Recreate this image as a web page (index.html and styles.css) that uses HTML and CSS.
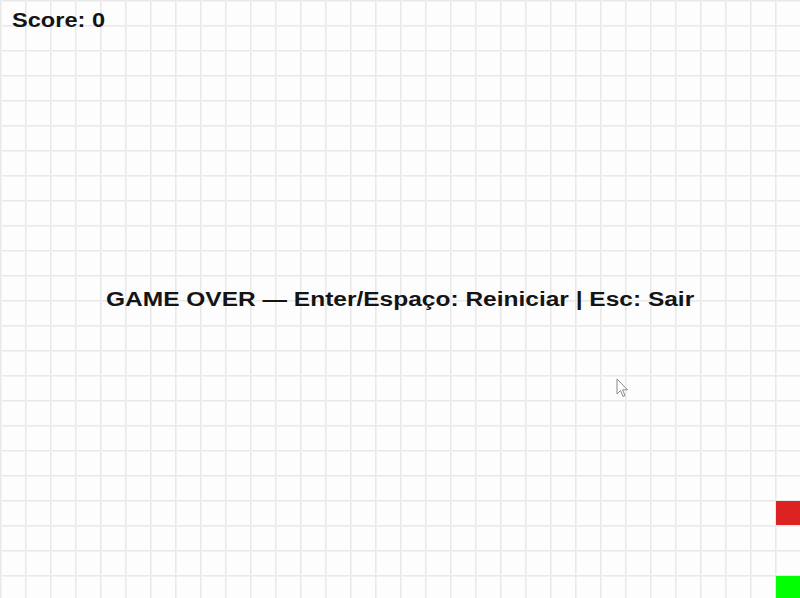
FILE: index.html
```html
<!DOCTYPE html>
<html lang="pt">
<head>
<meta charset="utf-8">
<title>Snake</title>
<link rel="stylesheet" href="styles.css">
</head>
<body>
<div class="game">
  <div class="score">Score: 0</div>
  <div class="message">GAME OVER — Enter/Espaço: Reiniciar | Esc: Sair</div>
  <div class="cell food"></div>
  <div class="cell snake"></div>
  <svg class="cursor" width="14" height="22" viewBox="0 0 14 22">
    <path d="M1 1 L1 16 L4.5 12.5 L7 18.5 L9 17.6 L6.6 11.8 L11.5 11.8 Z" fill="#fff" stroke="#8a8a8a" stroke-width="1" stroke-linejoin="round"/>
  </svg>
</div>
</body>
</html>
```
FILE: styles.css
```css
html, body {
  margin: 0;
  padding: 0;
  background: #fff;
}

.game {
  position: relative;
  width: 800px;
  height: 598px;
  overflow: hidden;
  display: grid;
  background-color: #fdfdfd;
  background-image:
    linear-gradient(to right, #e9e9e9 0, #e9e9e9 1px, #f1f1f1 1px, #f1f1f1 2px, transparent 2px),
    linear-gradient(to bottom, #e9e9e9 0, #e9e9e9 1px, #f1f1f1 1px, #f1f1f1 2px, transparent 2px);
  background-size: 25px 25px;
  font-family: "Liberation Sans", Arial, sans-serif;
  font-weight: bold;
  color: #141414;
}

.score {
  grid-area: 1 / 1;
  align-self: start;
  justify-self: start;
  margin: 10px 0 0 12px;
  font-size: 20px;
  line-height: 20px;
  transform: scaleX(1.18);
  transform-origin: left top;
}

.message {
  grid-area: 1 / 1;
  place-self: center;
  font-size: 20px;
  line-height: 20px;
  white-space: nowrap;
  transform: scaleX(1.225);
}

.cell {
  position: absolute;
  width: 24px;
  height: 24px;
}

.food {
  left: 776px;
  top: 501px;
  background: #dd2222;
}

.snake {
  left: 776px;
  top: 576px;
  background: #00ff00;
}

.cursor {
  position: absolute;
  left: 616px;
  top: 378px;
}
```
